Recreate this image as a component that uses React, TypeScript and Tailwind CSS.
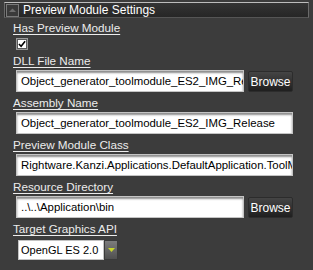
import React from "react";

const font = { fontFamily: '"Liberation Sans", Arial, sans-serif' };

function Label({ children, mt }: { children: React.ReactNode; mt: string }) {
  return (
    <div className={`${mt} ml-[13px] h-[16px] leading-[16px] text-[11.7px] text-[#ececec] underline underline-offset-[2px] decoration-[#ececec]`}>
      {children}
    </div>
  );
}

function TextBox({ value, w }: { value: string; w: string }) {
  return (
    <div
      className={`${w} h-[22px] bg-white border border-[#c4c4c4] shadow-[inset_0_2px_2px_rgba(0,0,0,0.45)] overflow-hidden whitespace-nowrap pl-[4px] text-[11.4px] leading-[20px] text-black`}
    >
      {value}
    </div>
  );
}

function Browse() {
  return (
    <div className="ml-[4px] w-[45px] h-[21px] mt-px rounded-[2px] border border-[#2c2c2c] bg-gradient-to-b from-[#454545] to-[#1f1f1f] text-white text-[12px] leading-[18px] flex items-center justify-center">
      Browse
    </div>
  );
}

export default function App() {
  return (
    <div className="w-[313px] h-[270px] bg-[#3c3c3c] overflow-hidden" style={font}>
      <div className="pt-[2px] px-[4px]">
        <div className="h-[16px] w-[305px] border-t border-[#bdbdbd] border-x border-b border-x-[#6a6a6a] border-b-[#555] bg-gradient-to-b from-[#343434] to-[#262626] flex items-center">
          <div className="ml-[1px] w-[13px] h-[13px] border border-[#7a7a7a] bg-[#3a3a3a] flex items-center justify-center">
            <svg width="7" height="4" viewBox="0 0 7 4">
              <path d="M0 4 L3.5 0.5 L7 4 Z" fill="#6e6e6e" />
            </svg>
          </div>
          <div className="ml-[4px] text-white text-[12px] leading-[14px]">Preview Module Settings</div>
        </div>
      </div>

      <Label mt="mt-[2px]">Has Preview Module</Label>
      <div className="mt-[2px] ml-[16px] w-[12px] h-[12px] border border-[#9a9a9a] bg-[#5a5a5a] p-px">
        <div className="w-full h-full bg-white flex items-center justify-center">
          <svg width="9" height="8" viewBox="0 0 9 8">
            <path d="M1 4 L3.5 6.5 L8 1" stroke="#000" strokeWidth="1.8" fill="none" />
          </svg>
        </div>
      </div>

      <Label mt="mt-[3px]">DLL File Name</Label>
      <div className="mt-px ml-[16px] flex">
        <TextBox value="Object_generator_toolmodule_ES2_IMG_Release" w="w-[228px]" />
        <Browse />
      </div>

      <Label mt="mt-[3px]">Assembly Name</Label>
      <div className="mt-px ml-[16px] flex">
        <TextBox value="Object_generator_toolmodule_ES2_IMG_Release" w="w-[277px]" />
      </div>

      <Label mt="mt-[3px]">Preview Module Class</Label>
      <div className="mt-px ml-[16px] flex">
        <TextBox value="Rightware.Kanzi.Applications.DefaultApplication.ToolModule" w="w-[277px]" />
      </div>

      <Label mt="mt-[3px]">Resource Directory</Label>
      <div className="mt-px ml-[16px] flex">
        <TextBox value="..\..\Application\bin" w="w-[228px]" />
        <Browse />
      </div>

      <Label mt="mt-[3px]">Target Graphics API</Label>
      <div className="mt-[3px] ml-[18px] flex h-[20px] w-[100px]">
        <div className="flex-1 bg-white border border-[#c4c4c4] text-[11px] leading-[18px] pl-[2px] text-black whitespace-nowrap overflow-hidden">
          OpenGL ES 2.0
        </div>
        <div className="w-[14px] h-full bg-gradient-to-b from-[#7c7c7c] to-[#505050] border border-[#3a3a3a] flex items-center justify-center">
          <svg width="7" height="4" viewBox="0 0 7 4">
            <path d="M0 0 L7 0 L3.5 4 Z" fill="#c8d62a" />
          </svg>
        </div>
      </div>
    </div>
  );
}
